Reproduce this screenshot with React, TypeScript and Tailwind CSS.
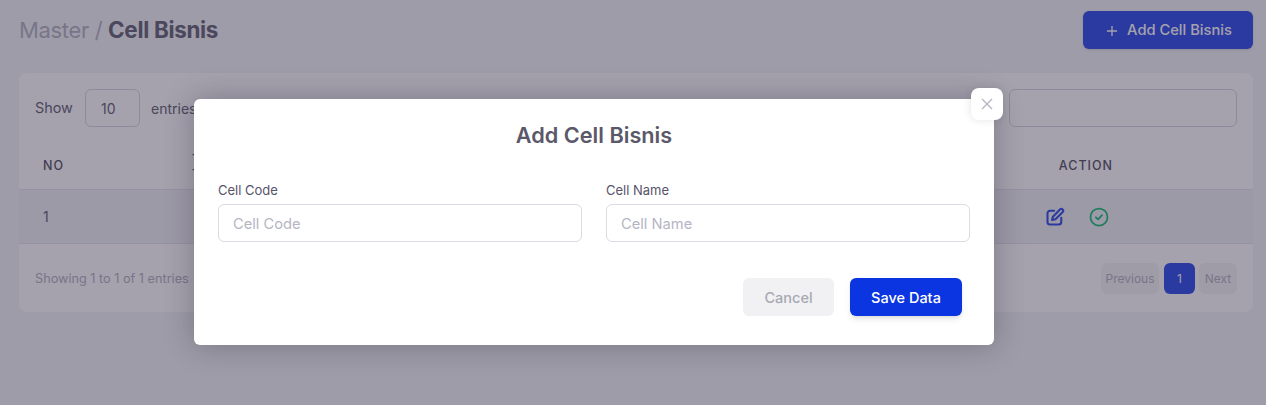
import React from "react";

function Dash() {
  return (
    <div className="w-[1266px] h-[405px] bg-[#f3f5f7] pl-[19px] pr-[13px] pt-[11px] overflow-hidden">
      <div className="flex items-center justify-between h-[38px]">
        <h1 className="text-[22px] text-[#b5b5c3] tracking-[-0.35px]">
          Master / <span className="font-bold text-[22.4px] tracking-[-0.3px] text-[#6a687a]">Cell Bisnis</span>
        </h1>
        <button className="w-[170px] h-[38px] pt-px rounded-md bg-[#3452e9] text-white text-[14.7px] font-medium flex items-center justify-center gap-[7px] shadow-sm">
          <svg width="16" height="16" viewBox="0 0 16 16" fill="none" stroke="currentColor" strokeWidth="1.3"><path d="M8 3v10M3 8h10" /></svg>
          Add Cell Bisnis
        </button>
      </div>
      <div className="mt-6 h-[239px] bg-white rounded-lg flex flex-col">
        <div className="flex items-center justify-between px-4 pt-4 h-[54px] text-sm text-[#6a687a]">
          <div className="flex items-center">
            <span className="w-[38px] text-[14.4px] pt-px">Show</span>
            <div className="ml-3 w-[55px] h-[38px] pt-px border border-[#d8d8e2] rounded-md flex items-center pl-[15px]">10</div>
            <span className="ml-[11px] pt-px">entries</span>
          </div>
          <div className="w-[228px] h-[38px] border border-[#d8d8e2] rounded-md" />
        </div>
        <div className="mt-[9px] h-[54px] pt-[6px] flex items-center border-b border-[#e4e6ef] text-[12.5px] leading-[15px] font-medium tracking-[1px] text-[#5a5869] pr-[140px]">
          <span className="pl-6 w-[173px]">NO</span>
          <span className="pt-[2px]">T<br />T</span>
          <span className="ml-auto">ACTION</span>
        </div>
        <div className="h-[54px] pt-px flex items-center justify-between bg-[#f2f2f5] border-b border-[#e4e6ef] text-sm text-[#6a687a] pr-[144px]">
          <span className="pl-6">1</span>
          <div className="flex items-center gap-[24px]">
            <svg width="20" height="20" viewBox="0 0 24 24" fill="none" stroke="#3452e9" strokeWidth="2.5" strokeLinecap="round" strokeLinejoin="round">
              <path d="M11 4.5H6a3 3 0 0 0-3 3V18a3 3 0 0 0 3 3h10.5a3 3 0 0 0 3-3v-5" />
              <path d="M18.2 2.8a2.2 2.2 0 0 1 3.1 3.1L12.5 14.7 8.5 15.7l1-4z" />
            </svg>
            <svg width="20" height="20" viewBox="0 0 24 24" fill="none" stroke="#22c07c" strokeWidth="2.1" strokeLinecap="round" strokeLinejoin="round">
              <circle cx="12" cy="12" r="10.2" />
              <path d="M8.3 12.4l2.6 2.4 4.8-5" strokeWidth="2.2" />
            </svg>
          </div>
        </div>
        <div className="flex-1 pt-px flex items-center justify-between px-4 text-[12.7px] text-[#b5b5c3]">
          <span>Showing 1 to 1 of 1 entries</span>
          <div className="flex items-center text-xs">
            <span className="w-[58px] h-[31px] rounded-md bg-[#f5f5f7] flex items-center justify-center">Previous</span>
            <span className="ml-[5px] w-[31px] h-[31px] rounded-md bg-[#3452e9] text-white flex items-center justify-center">1</span>
            <span className="ml-[4px] w-[38px] h-[31px] rounded-md bg-[#f5f5f7] flex items-center justify-center">Next</span>
          </div>
        </div>
      </div>
    </div>
  );
}

function Field({ label }: { label: string }) {
  return (
    <label className="flex-1 flex flex-col">
      <span className="text-[13px] leading-[20px] text-[#56536a]">{label}</span>
      <input
        placeholder={label}
        className="mt-[4px] w-full h-[38px] pt-[2px] rounded-md border border-[#dbdbe3] px-[14px] text-[14.7px] bg-white outline-none placeholder:text-[#b5b5c3]"
      />
    </label>
  );
}

export default function App() {
  return (
    <div className="relative w-[1266px] h-[405px] overflow-hidden font-['Inter','Liberation_Sans',sans-serif]">
      <Dash />
      <div className="absolute inset-0 bg-[#1e1632]/40" />
      <div className="absolute left-[194px] top-[99px] w-[800px] h-[246px] bg-white rounded-md shadow-[0_0_30px_rgba(30,22,50,0.3)] px-6 pt-[21px]">
        <button className="absolute -top-[11px] -right-[9px] w-[32px] h-[32px] bg-white rounded-lg flex items-center justify-center text-[#b5b5c3] shadow-[0_0_8px_rgba(30,22,50,0.12)]">
          <svg width="12" height="12" viewBox="0 0 12 12" fill="none" stroke="currentColor" strokeWidth="1.4"><path d="M1 1l10 10M11 1L1 11" /></svg>
        </button>
        <h2 className="text-center text-[21.7px] leading-[30px] font-semibold text-[#5a5869]">Add Cell Bisnis</h2>
        <div className="flex gap-6 mt-[30px]">
          <Field label="Cell Code" />
          <Field label="Cell Name" />
        </div>
        <div className="flex justify-end gap-4 mt-9 pr-2">
          <button className="w-[91px] h-[38px] pt-px rounded-md bg-[#f1f1f3] text-[#a8a8b3] text-[14.5px] font-medium">Cancel</button>
          <button className="w-[112px] h-[38px] pt-px rounded-md bg-[#0a35e0] text-white text-[14.5px] font-medium shadow-md">Save Data</button>
        </div>
      </div>
    </div>
  );
}
